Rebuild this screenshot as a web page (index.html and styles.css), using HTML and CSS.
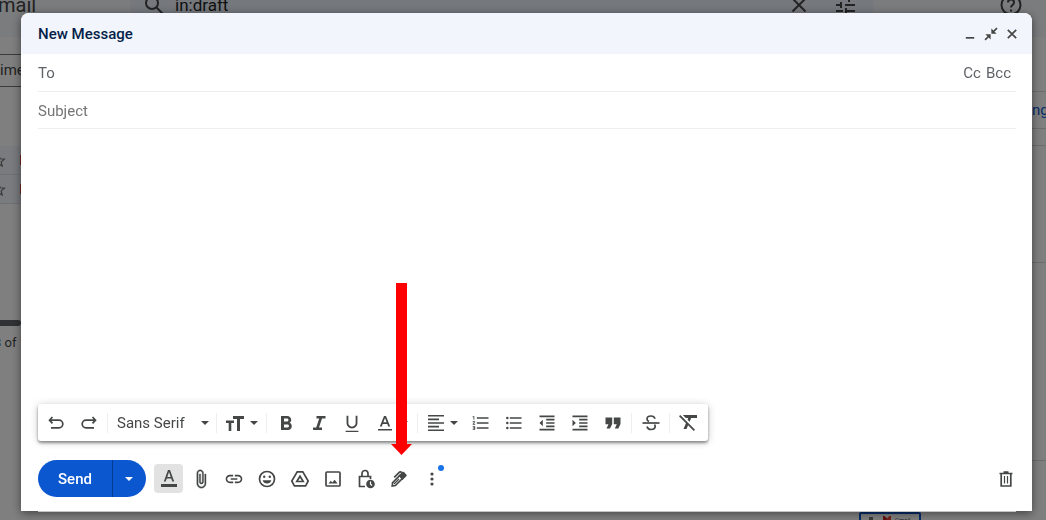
FILE: index.html
```html
<!DOCTYPE html>
<html lang="en">
<head>
  <meta charset="UTF-8" />
  <meta name="viewport" content="width=device-width, initial-scale=1.0"/>
  <title>New Message</title>
  <link rel="stylesheet" href="styles.css">
</head>
<body>

  <!-- Inbox behind the compose window -->
  <div class="inbox">
    <header class="inbox-header">
      <span class="brand">mail</span>
      <div class="search">
        <svg class="icon-24" viewBox="0 0 24 24"><circle cx="10" cy="10" r="6" class="line"/><path d="M14.500 14.500 21 21" class="line"/></svg>
        <span class="search-text">in:draft</span>
        <svg class="icon-24" viewBox="0 0 24 24"><path d="M5.500 5.500l13 13M18.500 5.500l-13 13" class="line"/></svg>
        <svg class="icon-24 tune" viewBox="0 0 24 24"><path d="M3 6h9M16 6h6M16 3v6M3 12h5M12 12h10M8 9v6M3 18h7M14 18h8M13 15v6" class="line"/></svg>
      </div>
      <svg class="icon-24" viewBox="0 0 24 24"><circle cx="12" cy="12" r="9.500" class="line"/><path d="M9 9.500c0-4 6-4 6 0 0 2.500-3 2.500-3 5M12 16.500v2" class="line"/></svg>
    </header>

    <div class="inbox-body">
      <div class="list">
        <div class="chip">ime</div>
        <div class="row"><svg class="star" viewBox="0 0 24 24"><path d="M12 3l2.700 6.200 6.700.6-5.100 4.400 1.500 6.600-5.800-3.500-5.800 3.500 1.500-6.600L2.600 9.800l6.700-.6z"/></svg><span class="draft"></span></div>
        <div class="row"><svg class="star" viewBox="0 0 24 24"><path d="M12 3l2.700 6.200 6.700.6-5.100 4.400 1.500 6.600-5.800-3.500-5.800 3.500 1.500-6.600L2.600 9.800l6.700-.6z"/></svg><span class="draft"></span></div>
        <div class="scrollbar"></div>
        <div class="count">3 of 1</div>
      </div>
      <div class="side">
        <div class="side-link">ng</div>
        <div class="side-gap"></div>
        <div class="side-block"></div>
        <div class="side-tall"></div>
      </div>
    </div>
    <div class="thumb">
      <span class="thumb-menu"></span>
      <svg class="thumb-logo" viewBox="0 0 8 6"><path d="M1 6V1l3 2.500" stroke="#c5221f"/><path d="M7 6V1L4 3.500" stroke="#ea4335"/></svg>
      Gmail
    </div>
  </div>
  <div class="overlay"></div>

  <form class="compose">
    <div class="compose-header">
      <h2>New Message</h2>
      <button type="button" class="win-btn" aria-label="Minimise"><svg viewBox="0 0 20 20"><path d="M4 15.500h12" class="line"/></svg></button>
      <button type="button" class="win-btn" aria-label="Exit full screen"><svg viewBox="0 0 20 20"><path d="M18.500 1.500l-6 6M1.500 18.500l6-6" class="line"/><path d="M10.500 2v7.500H18zM2 10.500h7.500V18z"/></svg></button>
      <button type="button" class="win-btn" aria-label="Close"><svg viewBox="0 0 20 20"><path d="M4 4l12 12M16 4 4 16" class="line"/></svg></button>
    </div>

    <div class="field">
      <label for="to">To</label>
      <input type="text" id="to" />
      <button type="button" class="text-btn">Cc</button>
      <button type="button" class="text-btn">Bcc</button>
    </div>
    <div class="field">
      <input type="text" id="subject" placeholder="Subject" aria-label="Subject" />
    </div>

    <textarea class="message" aria-label="Message body"></textarea>

    <div class="format-bar">
      <button type="button" class="tool" aria-label="Undo"><svg viewBox="0 0 20 20"><path d="M6.500 4 3.500 7.200l3 3.200M4 7.200h9a3.700 3.700 0 0 1 0 7.600H5" class="line"/></svg></button>
      <button type="button" class="tool" aria-label="Redo"><svg viewBox="0 0 20 20"><path d="M13.500 4l3 3.200-3 3.200M16 7.200H7a3.700 3.700 0 0 0 0 7.600h8" class="line"/></svg></button>
      <span class="sep"></span>
      <div class="font-picker">
        <select aria-label="Font"><option>Sans Serif</option></select>
        <svg class="caret" viewBox="0 0 10 6"><path d="M1 1h8L5 5z"/></svg>
      </div>
      <span class="sep"></span>
      <button type="button" class="tool tool-size" aria-label="Size">
        <svg viewBox="0 0 20 20"><path d="M8 3h11v3h-4v12h-3V6H8zM1 7.500h8v2.500H6.300v8H3.700v-8H1z"/></svg>
        <svg class="caret" viewBox="0 0 10 6"><path d="M1 1h8L5 5z"/></svg>
      </button>
      <span class="sep"></span>
      <button type="button" class="tool" aria-label="Bold"><svg viewBox="2 1 20 20"><path d="M15.600 10.790c.97-.67 1.650-1.770 1.650-2.790 0-2.260-1.750-4-4-4H7v14h7.040c2.090 0 3.710-1.700 3.710-3.790 0-1.520-.86-2.820-2.150-3.420zM10 6.500h3c.83 0 1.500.67 1.500 1.500s-.67 1.500-1.500 1.500h-3v-3zm3.500 9H10v-3h3.500c.83 0 1.500.67 1.500 1.500s-.67 1.500-1.500 1.500z"/></svg></button>
      <button type="button" class="tool" aria-label="Italic"><svg viewBox="2 1 20 20"><path d="M9.500 4v2.500h2.700l-3 9H6V18h9v-2.500h-3l3-9h3.500V4z"/></svg></button>
      <button type="button" class="tool" aria-label="Underline"><svg viewBox="1 0 22 22"><path d="M12 17c3.310 0 6-2.690 6-6V3h-2v8c0 2.200-1.800 4-4 4s-4-1.800-4-4V3H6v8c0 3.310 2.690 6 6 6zm-7 2.500V21h14v-1.500H5z"/></svg></button>
      <button type="button" class="tool tool-color" aria-label="Text colour">
        <svg viewBox="0 0 20 20"><path d="M9 3 4.800 13.500h2l.9-2.500h4.600l.9 2.500h2L11 3zm-.6 6.200L10 5l1.600 4.200zM3 16h14v1.500H3z"/></svg>
        <svg class="caret" viewBox="0 0 10 6"><path d="M1 1h8L5 5z"/></svg>
      </button>
      <span class="sep"></span>
      <button type="button" class="tool tool-align" aria-label="Align">
        <svg viewBox="0 0 20 20"><path d="M2 2h16v1.600H2zM2 5.600h11v1.600H2zM2 9.200h16v1.600H2zM2 12.800h11v1.600H2zM2 16.400h16V18H2z"/></svg>
        <svg class="caret" viewBox="0 0 10 6"><path d="M1 1h8L5 5z"/></svg>
      </button>
      <button type="button" class="tool" aria-label="Numbered list"><svg viewBox="0 0 24 24"><path d="M2 17h2v.5H3v1h1v.5H2v1h3v-4H2v1zm1-9h1V4H2v1h1v3zm-1 3h1.800L2 13.100v.9h3v-1H3.200L5 10.900V10H2v1zm5-6v2h14V5H7zm0 14h14v-2H7v2zm0-6h14v-2H7v2z"/></svg></button>
      <button type="button" class="tool" aria-label="Bulleted list"><svg viewBox="0 0 24 24"><circle cx="4" cy="6" r="1.500"/><circle cx="4" cy="12" r="1.500"/><circle cx="4" cy="18" r="1.500"/><path d="M7 19h14v-2H7v2zm0-6h14v-2H7v2zm0-8v2h14V5H7z"/></svg></button>
      <button type="button" class="tool" aria-label="Indent less"><svg viewBox="0 0 24 24"><path d="M11 17h10v-2H11v2zm-8-5l4 4V8l-4 4zm0 9h18v-2H3v2zM3 3v2h18V3H3zm8 6h10V7H11v2zm0 4h10v-2H11v2z"/></svg></button>
      <button type="button" class="tool" aria-label="Indent more"><svg viewBox="0 0 24 24"><path d="M3 21h18v-2H3v2zM3 8v8l4-4-4-4zm8 9h10v-2H11v2zM3 3v2h18V3H3zm8 6h10V7H11v2zm0 4h10v-2H11v2z"/></svg></button>
      <button type="button" class="tool" aria-label="Quote"><svg viewBox="2 2 20 20"><path d="M5.500 17.500H9l2.200-4.500V6.500H4.500v6.700h3zm8.300 0h3.500l2.200-4.500V6.500h-6.700v6.700h3z"/></svg></button>
      <span class="sep"></span>
      <button type="button" class="tool" aria-label="Strikethrough"><svg viewBox="2 2 20 20"><path d="M3.500 12h17" class="line"/><path d="M16 7.800C15.500 6 14 5 12 5c-2.500 0-4 1.200-4 3 0 1.300.8 2 2 2.500M8 15.500c.5 2 2 3 4 3 2.500 0 4.200-1.200 4.200-3.200 0-.8-.3-1.300-.7-1.800" class="line"/></svg></button>
      <span class="sep"></span>
      <button type="button" class="tool" aria-label="Remove formatting"><svg viewBox="2 3 20 20"><path d="M3.270 5 2 6.270l6.970 6.970L6.500 19h3l1.570-3.660L16.730 21 18 19.730 3.550 5.270zM6 5v.18L8.820 8h2.400l-.72 1.680 2.100 2.100L14.210 8H20V5z"/></svg></button>
    </div>

    <div class="actions">
      <div class="send-group">
        <button type="submit" class="send-btn">Send</button>
        <button type="button" class="send-more" aria-label="More send options"><svg class="caret" viewBox="0 0 10 6"><path d="M1 1h8L5 5z"/></svg></button>
      </div>
      <button type="button" class="toggle" aria-label="Formatting options"><svg viewBox="0 0 20 20"><path d="M9 1 4.800 12.500h1.900L7.800 9.500h4.400l1.100 3h1.900L11 1zm-.7 7L10 3l1.700 5zM2 15h16v3H2z"/></svg></button>
      <button type="button" class="tool" aria-label="Attach files"><svg viewBox="0 0 24 24"><path d="M16.500 6v11.500c0 2.210-1.790 4-4 4s-4-1.790-4-4V5c0-1.380 1.120-2.500 2.500-2.500s2.500 1.120 2.500 2.500v10.500c0 .55-.45 1-1 1s-1-.45-1-1V6H10v9.500c0 1.380 1.120 2.500 2.500 2.500s2.500-1.120 2.500-2.500V5c0-2.210-1.790-4-4-4S7 2.790 7 5v12.500c0 3.040 2.460 5.500 5.500 5.500s5.500-2.460 5.500-5.500V6h-1.500z" stroke="currentColor" stroke-width=".5"/></svg></button>
      <button type="button" class="tool" aria-label="Insert link"><svg viewBox="0 0 24 24"><path d="M3.900 12c0-1.710 1.390-3.100 3.100-3.100h4V7H7c-2.760 0-5 2.240-5 5s2.240 5 5 5h4v-1.900H7c-1.710 0-3.100-1.390-3.100-3.100zM8 13h8v-2H8v2zm9-6h-4v1.900h4c1.710 0 3.100 1.390 3.100 3.100s-1.390 3.100-3.100 3.100h-4V17h4c2.760 0 5-2.240 5-5s-2.240-5-5-5z"/></svg></button>
      <button type="button" class="tool" aria-label="Insert emoji"><svg viewBox="0 0 20 20"><circle cx="10" cy="10" r="7.500" class="line"/><circle cx="7.200" cy="7.800" r="1.200"/><circle cx="12.800" cy="7.800" r="1.200"/><path d="M5.700 11.300h8.600a4.500 4.500 0 0 1-8.600 0z"/></svg></button>
      <button type="button" class="tool" aria-label="Insert from Drive"><svg viewBox="0 0 20 20"><path d="M7.200 2.800h5.600l5.400 9.200-2.600 4.800H4.400L1.800 12z" class="line"/><path d="M10 7.200l3.200 5.300H6.800z" class="line"/></svg></button>
      <button type="button" class="tool" aria-label="Insert photo"><svg viewBox="0 0 20 20"><rect x="3" y="3" width="14" height="14" rx="1" class="line"/><path d="M5.500 14.500l2.300-2.800 1.500 1.800 2.300-2.800 3 3.800z"/></svg></button>
      <button type="button" class="tool" aria-label="Confidential mode"><svg viewBox="0 0 20 20"><path d="M9 17.500H3.500v-10h11V10M6 7.500V4.500a3 3 0 0 1 6 0v3" class="line"/><circle cx="14.500" cy="15" r="4.300"/><path d="M14.500 12.500v2.700l1.600 1.200" class="clock-hand"/></svg></button>
      <span class="pen-spot">
        <button type="button" class="tool" aria-label="Insert signature"><svg viewBox="0 0 20 20"><path d="M3.200 17l.4-3.300 7.200-7.200 2.800 2.800-7.200 7.200z" class="line"/><path d="M5 15l5-5" class="hair"/><path d="M9.500 6.800 13.200 3.100c.6-.6 1.200-.6 1.800 0l2.300 2.300c.6.6.6 1.200 0 1.800L13.500 11z"/><path d="M5.200 8.300l5-5c.7-.7 1.500-.6 2.500.4" class="line"/></svg></button>
        <svg class="arrow" viewBox="0 0 21 172"><path d="M5 0h11v161h5L10.500 172 0 161h5z"/></svg>
      </span>
      <button type="button" class="tool more" aria-label="More options"><svg viewBox="0 0 20 20"><circle cx="10" cy="5" r="1.600"/><circle cx="10" cy="10" r="1.600"/><circle cx="10" cy="15" r="1.600"/></svg><span class="dot"></span></button>
      <button type="button" class="tool trash" aria-label="Discard draft"><svg viewBox="0 0 20 20"><path d="M3.500 4.500h13M7.500 3h5M5.200 5v12h9.600V5" class="line"/><path d="M8.500 7v7.500M11.500 7v7.500" class="hair"/></svg></button>
    </div>
  </form>

</body>
</html>
```

FILE: styles.css
```css
* {
  box-sizing: border-box;
}

body {
  margin: 0;
  height: 100vh;
  overflow: hidden;
  font-family: Roboto, "Liberation Sans", sans-serif;
  font-size: 15px;
  color: #444746;
  background: #fff;
}

button, input, select, textarea {
  font: inherit;
  color: inherit;
  border: none;
  background: none;
  padding: 0;
  margin: 0;
  outline: none;
}

button {
  cursor: pointer;
}

svg {
  display: block;
  fill: currentColor;
}

.line {
  fill: none;
  stroke: currentColor;
  stroke-width: 1.7;
}

.hair {
  fill: none;
  stroke: currentColor;
  stroke-width: 1.2;
}

/* Inbox in the background */
.inbox {
  height: 100vh;
  display: flex;
  flex-direction: column;
  overflow: hidden;
}

.inbox-header {
  flex: none;
  display: flex;
  align-items: center;
  height: 64px;
  margin-top: -27px;
  padding-right: 23px;
  background: #f6f8fc;
}

.inbox-header .line {
  stroke-width: 2;
}

.brand {
  width: 132px;
  margin-left: -2px;
  font-size: 20px;
}

.search {
  flex: 1;
  display: flex;
  align-items: center;
  height: 48px;
  margin-right: 125px;
  padding: 0 17px 0 12px;
  background: #eaf1fb;
  border-radius: 0 0 24px 24px;
}

.search-text {
  flex: 1;
  margin-left: 9px;
  font-size: 17px;
  line-height: 20px;
  color: #1f1f1f;
}

.icon-24 {
  width: 24px;
  height: 24px;
}

.tune {
  margin-left: 22px;
}

.inbox-body {
  flex: 1;
  display: flex;
  justify-content: space-between;
}

.list {
  width: 40px;
  padding-top: 17px;
}

.chip {
  height: 33px;
  margin-bottom: 59px;
  line-height: 31px;
  border: 1px solid #747775;
  border-left: none;
}

.row {
  display: flex;
  align-items: center;
  height: 29px;
  background: #f2f6fc;
  border-bottom: 1px solid #dfe3ea;
}

.star {
  width: 15px;
  height: 15px;
  margin-left: -9px;
  fill: none;
  stroke: #747775;
  stroke-width: 2;
}

.draft {
  width: 4px;
  height: 10px;
  margin-left: 14px;
  background: #dd4b39;
}

.scrollbar {
  width: 21px;
  height: 6px;
  margin-top: 116px;
  border-radius: 0 3px 3px 0;
  background: #5f6368;
}

.count {
  margin-top: 9px;
  margin-left: -6px;
  font-size: 13px;
  white-space: nowrap;
}

.side {
  width: 14px;
  padding-top: 54px;
}

.side-link {
  height: 38px;
  line-height: 36px;
  border: solid #d8dadd;
  border-width: 1px 0;
  color: #0b57d0;
}

.side-gap {
  height: 17px;
  border-bottom: 1px solid #d8dadd;
}

.side-block {
  height: 117px;
  border-bottom: 1px solid #d8dadd;
}

.side-tall {
  height: 198px;
  border-bottom: 1px solid #d8dadd;
}

.thumb {
  flex: none;
  display: flex;
  align-items: center;
  gap: 10px;
  align-self: flex-end;
  width: 62px;
  height: 20px;
  margin: 0 125px -12px 0;
  padding: 0 8px 6px;
  border: 2px solid #0b57d0;
  border-radius: 2px;
  font-size: 6px;
}

.thumb-menu {
  width: 4px;
  height: 4px;
  background: #747775;
}

.thumb-logo {
  flex: none;
  width: 8px;
  height: 6px;
  margin-right: -6px;
  fill: none;
  stroke-width: 2;
}

.overlay {
  position: fixed;
  inset: 0;
  background: rgba(0, 0, 0, 0.5);
}

/* Compose window */
.compose {
  position: fixed;
  inset: 13px 14px 9px 21px;
  display: flex;
  flex-direction: column;
  background: #fff;
  border-radius: 8px 8px 0 0;
  box-shadow: 0 2px 10px rgba(0, 0, 0, 0.5);
}

/* light edge left under the window */
.compose::after {
  content: "";
  position: absolute;
  left: 17px;
  right: 16px;
  bottom: -1px;
  height: 1px;
  background: #c4c4c4;
}

.compose-header {
  flex: none;
  display: flex;
  align-items: center;
  height: 41px;
  padding: 0 10px 0 17px;
  border-radius: 8px 8px 0 0;
  background: #f2f6fc;
}

.compose-header h2 {
  flex: 1;
  margin: 0;
  font-size: 15px;
  font-weight: 500;
  color: #041e49;
}

.win-btn {
  display: flex;
  justify-content: center;
  width: 21px;
}

.win-btn svg {
  width: 14px;
  height: 14px;
}

.win-btn .line {
  stroke-width: 2.4;
}

.field {
  flex: none;
  display: flex;
  align-items: center;
  gap: 5px;
  height: 37px;
  margin: 0 16px 0 17px;
  padding: 1px 5px 0 0;
  border-bottom: 1px solid #eceff1;
}

.compose-header + .field {
  height: 38px;
}

.field label,
.text-btn {
  color: #5f6368;
}

.field input {
  flex: 1;
  min-width: 0;
}

.field input::placeholder {
  color: #757575;
  opacity: 1;
}

.message {
  flex: 1;
  min-height: 0;
  margin: 0 17px;
  resize: none;
}

/* Formatting toolbar */
.format-bar {
  flex: none;
  align-self: flex-start;
  display: flex;
  align-items: center;
  height: 37px;
  margin-left: 17px;
  padding: 0 3px 0 1px;
  border-radius: 3px;
  background: #fff;
  box-shadow: 0 2px 3px rgba(0, 0, 0, 0.4), 0 1px 9px rgba(0, 0, 0, 0.2);
}

.tool {
  flex: none;
  display: flex;
  align-items: center;
  justify-content: center;
  width: 33px;
  height: 30px;
}

.tool svg {
  width: 20px;
  height: 20px;
}

.tool svg.caret,
.caret {
  flex: none;
  width: 10px;
  height: 6px;
}

.sep {
  width: 1px;
  height: 20px;
  margin: 0 2px;
  background: #eceef0;
}

.font-picker {
  display: flex;
  align-items: center;
  width: 104px;
  padding: 0 4px 0 7px;
}

.font-picker select {
  flex: 1;
  min-width: 0;
  appearance: none;
}

.tool-size {
  width: 45px;
  gap: 4px;
}

.tool-color {
  width: 47px;
  gap: 4px;
}

.tool-align {
  width: 44px;
  gap: 3px;
}

/* Bottom row */
.actions {
  flex: none;
  display: flex;
  align-items: center;
  padding: 19px 10px 14px 17px;
}

.send-group {
  display: flex;
  width: 108px;
  height: 37px;
  margin-right: 6px;
  border-radius: 19px;
  overflow: hidden;
  background: #0b57d0;
  color: #fff;
}

.send-btn {
  width: 75px;
  font-weight: 500;
  border-right: 1px solid #063a91;
}

.send-more {
  flex: 1;
  display: flex;
  align-items: center;
  padding-left: 11px;
}

.toggle {
  display: flex;
  align-items: center;
  justify-content: center;
  width: 29px;
  height: 29px;
  margin: 0 1px 0 2px;
  border-radius: 4px;
  background: #e2e2e2;
}

.toggle svg {
  width: 20px;
  height: 20px;
}

.clock-hand {
  fill: none;
  stroke: #fff;
  stroke-width: 1.2;
}

.pen-spot,
.more {
  position: relative;
}

.arrow {
  position: absolute;
  left: 9px;
  bottom: 39px;
  width: 21px;
  height: 172px;
  fill: #f00;
}

.dot {
  position: absolute;
  top: 1px;
  right: 4px;
  width: 6px;
  height: 6px;
  border-radius: 50%;
  background: #1a73e8;
}

.trash {
  margin-left: auto;
}
```
